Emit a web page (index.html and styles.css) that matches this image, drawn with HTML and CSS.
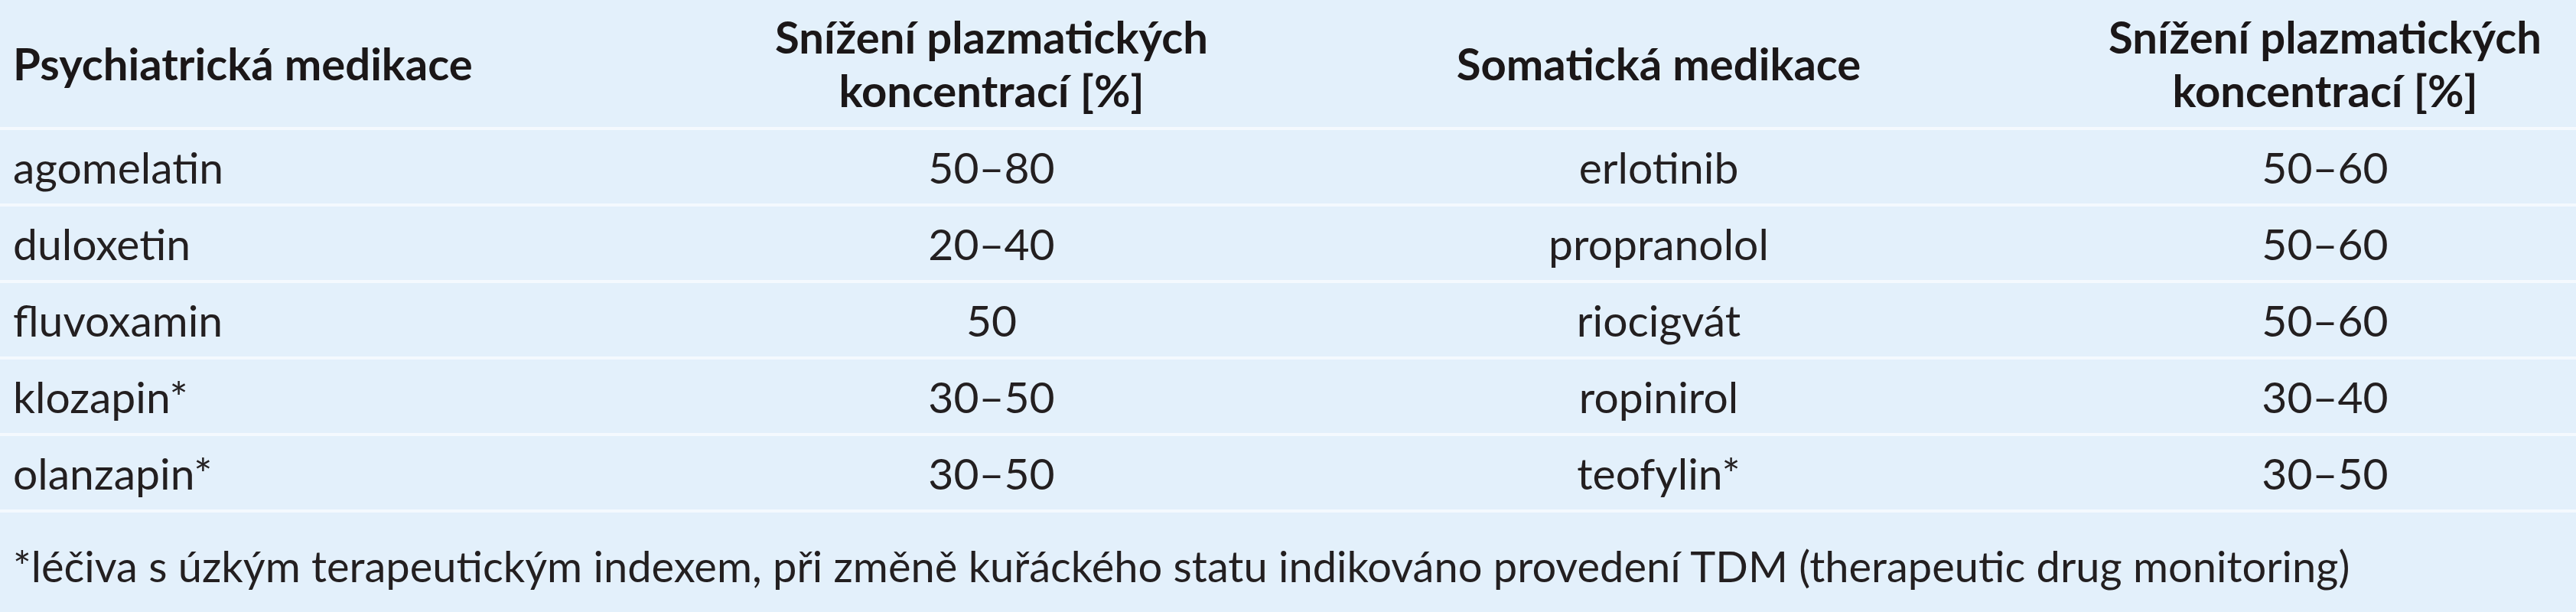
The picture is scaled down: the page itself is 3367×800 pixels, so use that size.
FILE: index.html
```html
<!DOCTYPE html>
<html lang="cs">
<head>
<meta charset="utf-8">
<title>Snížení plazmatických koncentrací</title>
<link rel="stylesheet" href="styles.css">
</head>
<body>
<div class="sheet">
  <div class="row head">
    <div class="cell left">Psychiatrická medikace</div>
    <div class="cell mid">Snížení plazmatických<br>koncentrací [%]</div>
    <div class="cell mid">Somatická medikace</div>
    <div class="cell mid">Snížení plazmatických<br>koncentrací [%]</div>
  </div>
  <div class="row">
    <div class="cell left">agomelatin</div>
    <div class="cell mid">50–80</div>
    <div class="cell mid">erlotinib</div>
    <div class="cell mid">50–60</div>
  </div>
  <div class="row">
    <div class="cell left">duloxetin</div>
    <div class="cell mid">20–40</div>
    <div class="cell mid">propranolol</div>
    <div class="cell mid">50–60</div>
  </div>
  <div class="row">
    <div class="cell left">fluvoxamin</div>
    <div class="cell mid">50</div>
    <div class="cell mid">riocigvát</div>
    <div class="cell mid">50–60</div>
  </div>
  <div class="row">
    <div class="cell left">klozapin*</div>
    <div class="cell mid">30–50</div>
    <div class="cell mid">ropinirol</div>
    <div class="cell mid">30–40</div>
  </div>
  <div class="row">
    <div class="cell left">olanzapin*</div>
    <div class="cell mid">30–50</div>
    <div class="cell mid">teofylin*</div>
    <div class="cell mid">30–50</div>
  </div>
  <p class="note">*léčiva s úzkým terapeutickým indexem, při změně kuřáckého statu indikováno provedení TDM (therapeutic drug monitoring)</p>
</div>
</body>
</html>
```
FILE: styles.css
```css
html, body {
  margin: 0;
  padding: 0;
  background: #e3f0fb;
}
body {
  font-family: Lato, "Open Sans", "DejaVu Sans", sans-serif;
  color: #231f20;
  width: 3367px;
  height: 800px;
  overflow: hidden;
}
.sheet {
  display: flex;
  flex-direction: column;
}
.row {
  display: grid;
  grid-template-columns: 967px 658px 1086px 656px;
  height: 96px;
  align-items: center;
  border-bottom: 4px solid #f4f9fe;
  font-size: 57px;
  line-height: 1.2;
  white-space: nowrap;
}
.row.head {
  height: 166px;
  font-size: 58px;
  font-weight: 700;
  color: #1b1718;
}
.cell.left {
  padding-left: 17px;
}
.cell.mid {
  text-align: center;
}
.note {
  margin: 0;
  padding: 36px 0 0 17px;
  font-size: 56px;
  line-height: 1.2;
  white-space: nowrap;
}
```
